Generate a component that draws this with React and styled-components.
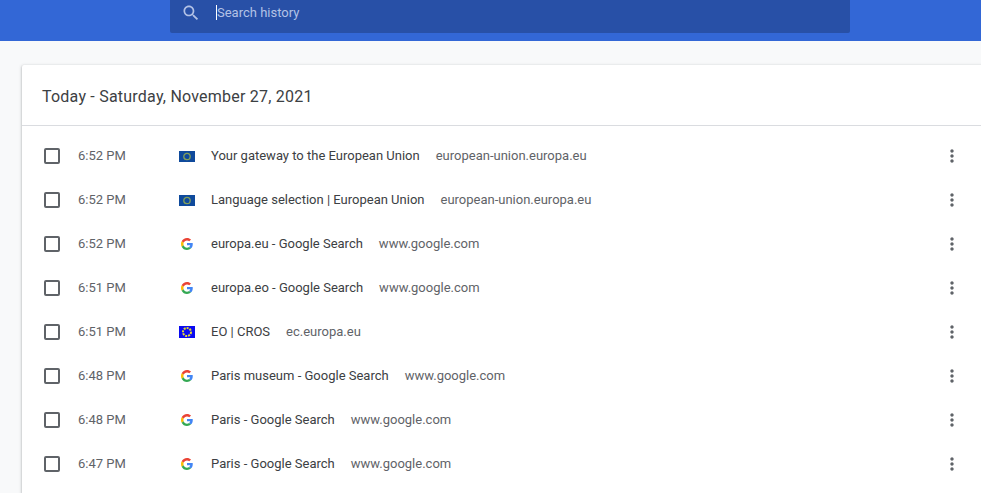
import styled, { createGlobalStyle } from 'styled-components';

const entries = [
  { time: '6:52 PM', icon: 'eu', title: 'Your gateway to the European Union', domain: 'european-union.europa.eu' },
  { time: '6:52 PM', icon: 'eu', title: 'Language selection | European Union', domain: 'european-union.europa.eu' },
  { time: '6:52 PM', icon: 'google', title: 'europa.eu - Google Search', domain: 'www.google.com' },
  { time: '6:51 PM', icon: 'google', title: 'europa.eo - Google Search', domain: 'www.google.com' },
  { time: '6:51 PM', icon: 'eo', title: 'EO | CROS', domain: 'ec.europa.eu' },
  { time: '6:48 PM', icon: 'google', title: 'Paris museum - Google Search', domain: 'www.google.com' },
  { time: '6:48 PM', icon: 'google', title: 'Paris - Google Search', domain: 'www.google.com' },
  { time: '6:47 PM', icon: 'google', title: 'Paris - Google Search', domain: 'www.google.com' },
];

function SearchIcon() {
  return (
    <svg width="20" height="20" viewBox="0 0 24 24" fill="#b3c2e6">
      <path d="M15.5 14h-.79l-.28-.27C15.41 12.59 16 11.11 16 9.5 16 5.91 13.09 3 9.5 3S3 5.91 3 9.5 5.91 16 9.5 16c1.61 0 3.09-.59 4.23-1.57l.27.28v.79l5 4.99L20.49 19l-4.99-5zm-6 0C7.01 14 5 11.99 5 9.5S7.01 5 9.5 5 14 7.01 14 9.5 11.99 14 9.5 14z" />
    </svg>
  );
}

function MoreIcon() {
  return (
    <svg width="20" height="20" viewBox="0 0 24 24" fill="#5f6368">
      <path d="M12 8c1.1 0 2-.9 2-2s-.9-2-2-2-2 .9-2 2 .9 2 2 2zm0 2c-1.100 0-2 .9-2 2s.9 2 2 2 2-.9 2-2-.9-2-2-2zm0 6c-1.100 0-2 .9-2 2s.9 2 2 2 2-.9 2-2-.9-2-2-2z" />
    </svg>
  );
}

function GoogleIcon() {
  return (
    <svg width="12" height="12" viewBox="0 0 48 48">
      <path fill="#EA4335" d="M24 9.500c3.500 0 6.700 1.200 9.200 3.600l6.900-6.900C35.900 2.400 30.500 0 24 0 14.600 0 6.500 5.400 2.600 13.200l8 6.200C12.400 13.700 17.700 9.500 24 9.500z" />
      <path fill="#4285F4" d="M47 24.500c0-1.600-.1-3.100-.4-4.500H24v9h12.900c-.6 3-2.200 5.500-4.800 7.200l7.700 6C44.300 38.500 47 32.100 47 24.500z" />
      <path fill="#FBBC05" d="M10.600 28.600A14.500 14.500 0 0 1 9.800 24c0-1.600.3-3.200.8-4.600l-8-6.200A24 24 0 0 0 0 24c0 3.900.9 7.500 2.600 10.800l8-6.200z" />
      <path fill="#34A853" d="M24 48c6.500 0 11.900-2.100 15.800-5.800l-7.700-6c-2.100 1.400-4.900 2.300-8.100 2.300-6.300 0-11.600-4.200-13.400-10l-8 6.200C6.500 42.600 14.600 48 24 48z" />
    </svg>
  );
}

function FlagIcon({ kind }) {
  const isEo = kind === 'eo';
  return (
    <svg width="16" height={isEo ? 12 : 11} viewBox={isEo ? '0 0 16 12' : '0 0 16 11'}>
      <rect width="16" height={isEo ? 12 : 11} fill={isEo ? '#0a0af0' : '#0f4a9c'} />
      <circle
        cx="8"
        cy={isEo ? 6 : 5.5}
        r={isEo ? 4 : 3.2}
        fill="none"
        stroke={isEo ? '#e8dc30' : '#84a05a'}
        strokeWidth={isEo ? 2 : 1.3}
        strokeDasharray={isEo ? '2 1' : undefined}
      />
    </svg>
  );
}

function App() {
  return (
    <>
      <GlobalStyle />
      <Toolbar>
        <SearchBox>
          <SearchIcon />
          <Caret />
          <Placeholder>Search history</Placeholder>
        </SearchBox>
      </Toolbar>
      <Card>
        <CardTitle>Today - Saturday, November 27, 2021</CardTitle>
        <Rows>
          {entries.map((entry, i) => (
            <Row key={i}>
              <CheckBox />
              <Time>{entry.time}</Time>
              <Favicon>
                {entry.icon === 'google' ? <GoogleIcon /> : <FlagIcon kind={entry.icon} />}
              </Favicon>
              <Title>{entry.title}</Title>
              <Domain>{entry.domain}</Domain>
              <Menu>
                <MoreIcon />
              </Menu>
            </Row>
          ))}
        </Rows>
      </Card>
    </>
  );
}

const GlobalStyle = createGlobalStyle`
  html, body {
    margin: 0;
    height: 100%;
    overflow: hidden;
    background: #f8f9fa;
    font-family: Roboto, "Liberation Sans", sans-serif;
  }
`
const Toolbar = styled.header`
  height: 41px;
  background: #3367d6;
  padding-left: 170px;
`
const SearchBox = styled.div`
  width: 680px;
  height: 33px;
  box-sizing: border-box;
  padding: 0 0 8px 11px;
  display: flex;
  align-items: center;
  background: #2850a7;
  border-radius: 0 0 2px 2px;
`
const Caret = styled.span`
  width: 1px;
  height: 15px;
  margin-left: 15px;
  background: #fff;
`
const Placeholder = styled.span`
  font-size: 13px;
  color: #b3c2e6;
`
const Card = styled.main`
  width: 970px;
  height: calc(100vh - 65px);
  margin: 24px 0 0 22px;
  background: #fff;
  border-radius: 2px 0 0 0;
  box-shadow: 0 1px 2px rgba(60, 64, 67, 0.3), 0 1px 3px 1px rgba(60, 64, 67, 0.15);
`
const CardTitle = styled.h2`
  margin: 0;
  height: 61px;
  box-sizing: border-box;
  padding: 2px 0 0 20px;
  display: flex;
  align-items: center;
  font-size: 16px;
  font-weight: 400;
  letter-spacing: 0.22px;
  color: #3c4043;
  border-bottom: 1px solid #dadce0;
`
const Rows = styled.div`
  padding-top: 8px;
`
const Row = styled.div`
  height: 44px;
  padding: 0 30px 0 22px;
  display: flex;
  align-items: center;
  font-size: 13px;
`
const CheckBox = styled.span`
  width: 16px;
  height: 16px;
  box-sizing: border-box;
  flex: none;
  border: 2px solid #5f6368;
  border-radius: 2px;
`
const Time = styled.span`
  width: 101px;
  margin-left: 18px;
  padding-bottom: 2px;
  flex: none;
  color: #5f6368;
`
const Favicon = styled.span`
  width: 16px;
  height: 16px;
  margin-right: 16px;
  flex: none;
  display: flex;
  align-items: center;
  justify-content: center;
`
const Title = styled.span`
  padding-bottom: 2px;
  color: #3c4043;
`
const Domain = styled.span`
  margin-left: 16px;
  padding-bottom: 2px;
  color: #5f6368;
`
const Menu = styled.span`
  margin-left: auto;
  display: flex;
`

export default App;
